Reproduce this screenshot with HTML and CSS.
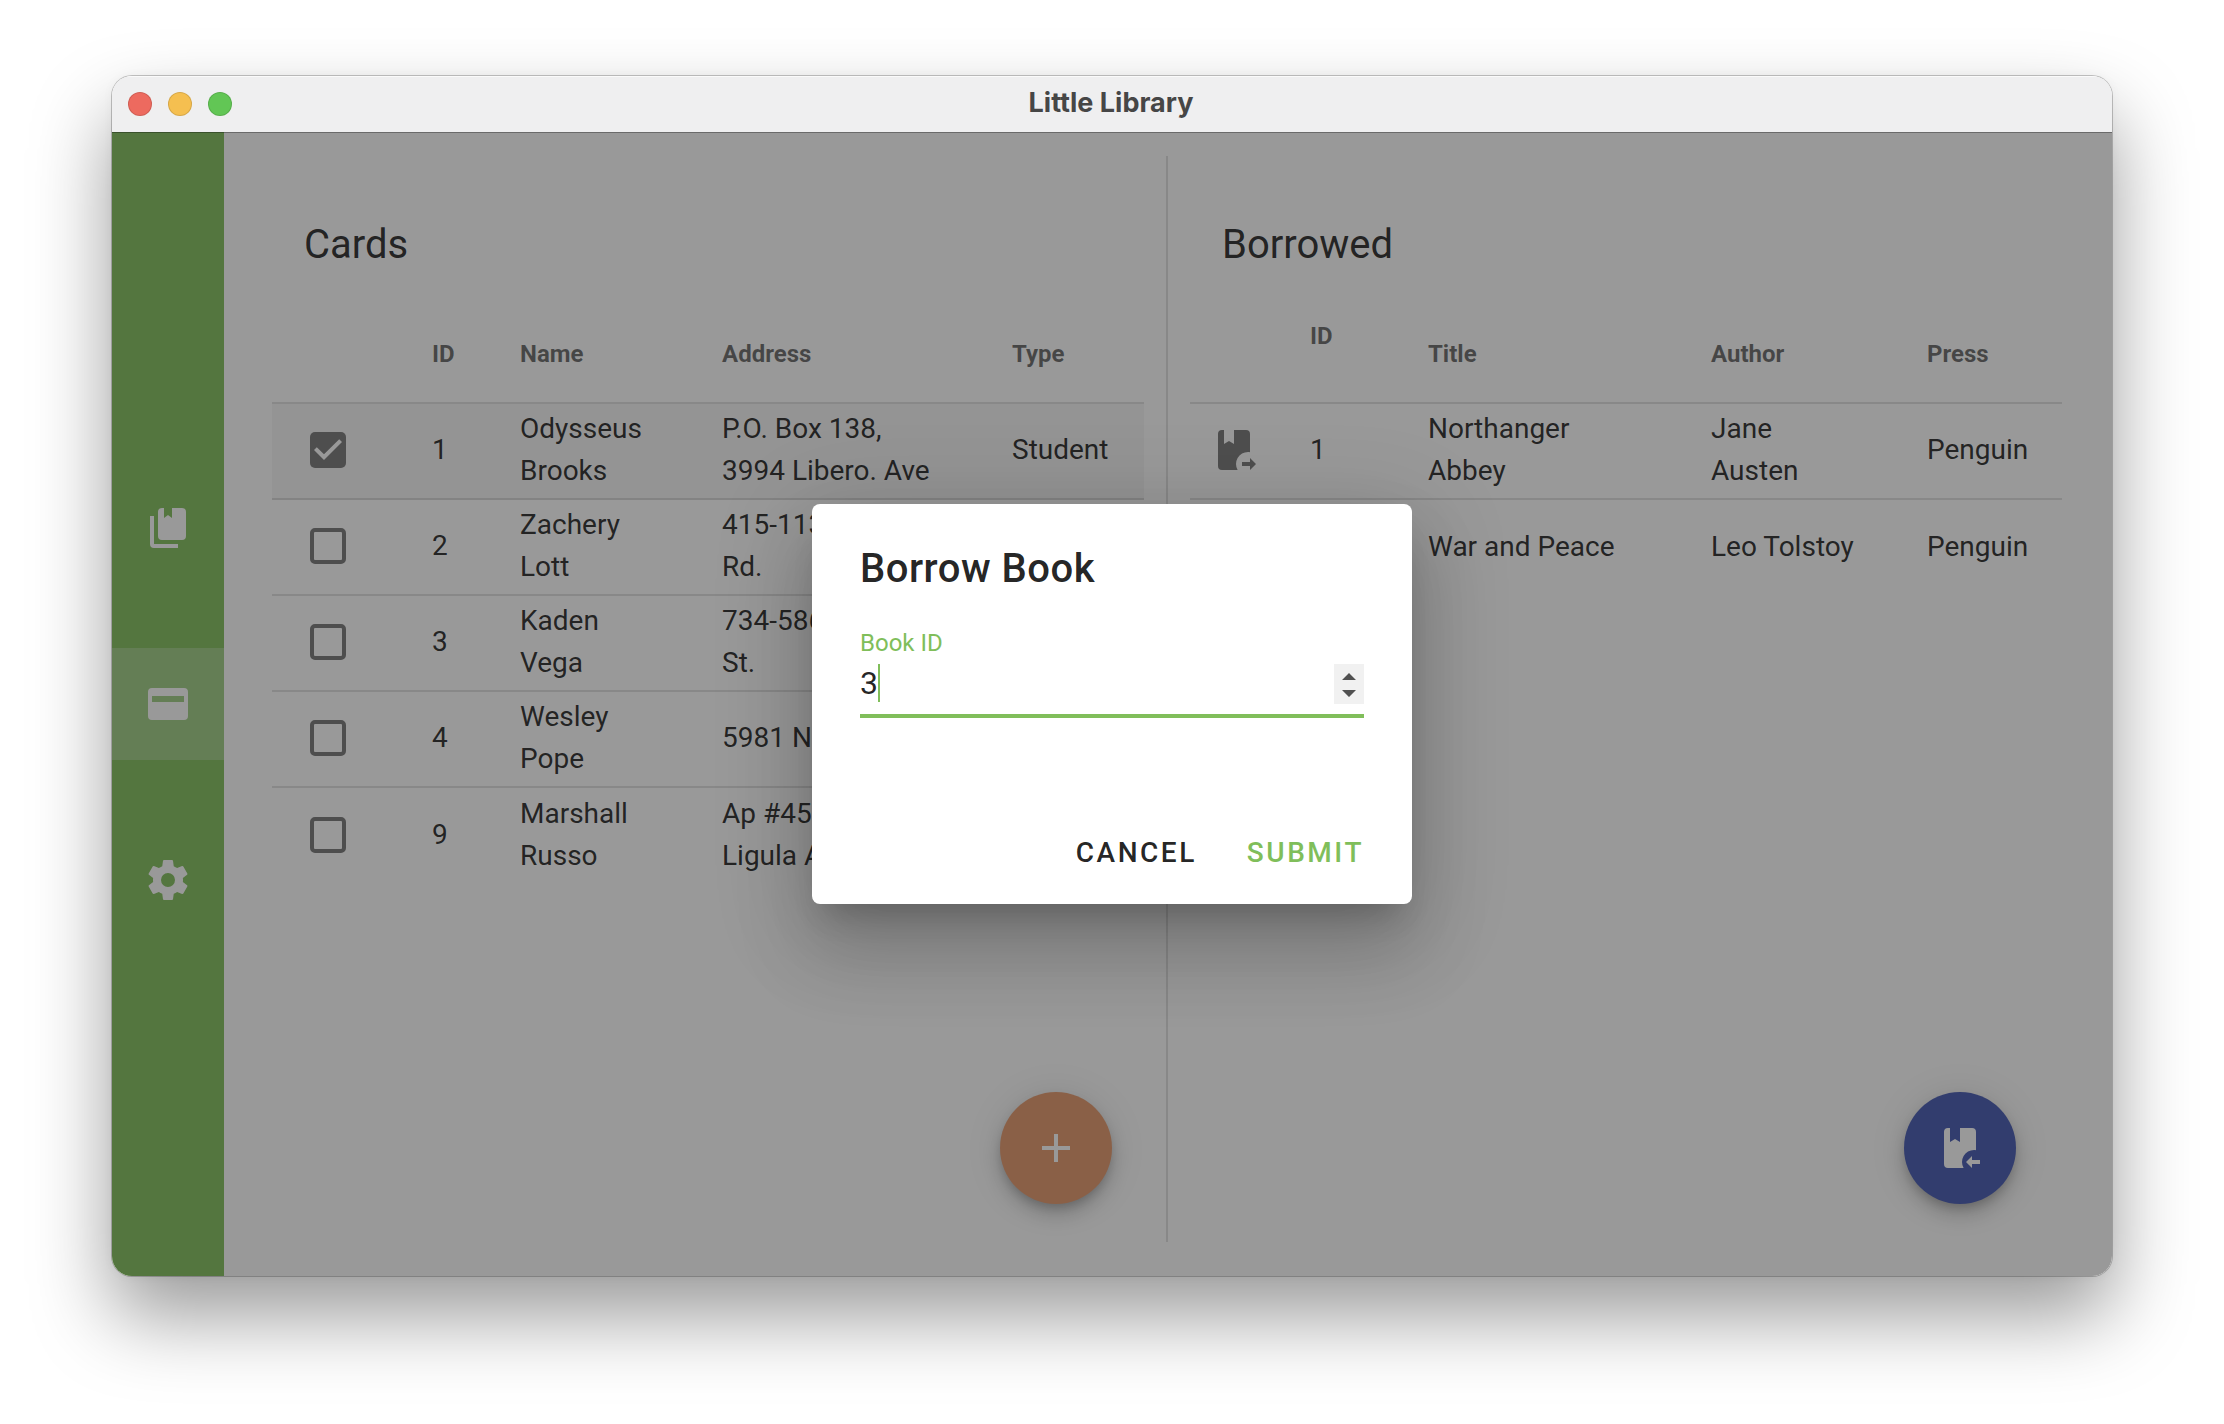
FILE: index.html
```html
<!DOCTYPE html>
<html lang="en">
<head>
<meta charset="utf-8">
<title>Little Library</title>
<link rel="stylesheet" href="styles.css">
</head>
<body>
<div class="window">
  <header class="titlebar">
    <div class="lights">
      <button class="light light-close" type="button" aria-label="Close"></button>
      <button class="light light-minimize" type="button" aria-label="Minimize"></button>
      <button class="light light-zoom" type="button" aria-label="Zoom"></button>
    </div>
    <h1 class="titlebar-title">Little Library</h1>
  </header>

  <div class="app">
    <nav class="sidebar" aria-label="Main">
      <a class="nav-item" href="#books" aria-label="Books">
        <svg class="icon" viewBox="0 0 24 24"><path d="M19,18H9A2,2 0 0,1 7,16V4A2,2 0 0,1 9,2H10V7L12,5.5L14,7V2H19A2,2 0 0,1 21,4V16A2,2 0 0,1 19,18M17,20V22H5A2,2 0 0,1 3,20V6H5V20H17Z"/></svg>
      </a>
      <a class="nav-item nav-item-active" href="#cards" aria-label="Cards" aria-current="page">
        <svg class="icon" viewBox="0 0 24 24"><path d="M20,4H4A2,2 0 0,0 2,6V18A2,2 0 0,0 4,20H20A2,2 0 0,0 22,18V6A2,2 0 0,0 20,4M20,11H4V8H20V11Z"/></svg>
      </a>
      <a class="nav-item" href="#settings" aria-label="Settings">
        <svg class="icon" viewBox="0 0 24 24"><path d="M12,15.5A3.5,3.5 0 0,1 8.5,12A3.5,3.5 0 0,1 12,8.5A3.5,3.5 0 0,1 15.5,12A3.5,3.5 0 0,1 12,15.5M19.43,12.97C19.47,12.65 19.5,12.33 19.5,12C19.5,11.67 19.47,11.34 19.43,11L21.54,9.37C21.73,9.22 21.78,8.95 21.66,8.73L19.66,5.27C19.54,5.05 19.27,4.96 19.05,5.05L16.56,6.05C16.04,5.66 15.5,5.32 14.87,5.07L14.5,2.42C14.46,2.18 14.25,2 14,2H10C9.75,2 9.54,2.18 9.5,2.42L9.13,5.07C8.5,5.32 7.96,5.66 7.44,6.05L4.95,5.05C4.73,4.96 4.46,5.05 4.34,5.27L2.34,8.73C2.21,8.95 2.27,9.22 2.46,9.37L4.57,11C4.53,11.34 4.5,11.67 4.5,12C4.5,12.33 4.53,12.65 4.57,12.97L2.46,14.63C2.27,14.78 2.21,15.05 2.34,15.27L4.34,18.73C4.46,18.95 4.73,19.03 4.95,18.95L7.44,17.94C7.96,18.34 8.5,18.68 9.13,18.93L9.5,21.58C9.54,21.82 9.75,22 10,22H14C14.25,22 14.46,21.82 14.5,21.58L14.87,18.93C15.5,18.67 16.04,18.34 16.56,17.94L19.05,18.95C19.27,19.03 19.54,18.95 19.66,18.73L21.66,15.27C21.78,15.05 21.73,14.78 21.54,14.63L19.43,12.97Z"/></svg>
      </a>
    </nav>

    <main class="main">
      <section class="pane pane-cards">
        <h2 class="pane-title">Cards</h2>
        <table class="table">
          <colgroup><col class="col-check"><col class="col-card-id"><col class="col-name"><col><col class="col-type"></colgroup>
          <thead>
            <tr><th></th><th>ID</th><th>Name</th><th>Address</th><th>Type</th></tr>
          </thead>
          <tbody>
            <tr class="row-selected"><td><input class="check" type="checkbox" aria-label="Select card 1" checked></td><td>1</td><td>Odysseus Brooks</td><td>P.O. Box 138, 3994 Libero. Ave</td><td>Student</td></tr>
            <tr><td><input class="check" type="checkbox" aria-label="Select card 2"></td><td>2</td><td>Zachery Lott</td><td>415-1132 Auctor Rd.</td><td>Student</td></tr>
            <tr><td><input class="check" type="checkbox" aria-label="Select card 3"></td><td>3</td><td>Kaden Vega</td><td>734-5861 Congue St.</td><td>Teacher</td></tr>
            <tr><td><input class="check" type="checkbox" aria-label="Select card 4"></td><td>4</td><td>Wesley Pope</td><td>5981 Nibh Rd.</td><td>Student</td></tr>
            <tr><td><input class="check" type="checkbox" aria-label="Select card 9"></td><td>9</td><td>Marshall Russo</td><td>Ap #452-2193 Ligula Av.</td><td>Teacher</td></tr>
          </tbody>
        </table>
        <button class="fab fab-add" type="button" aria-label="Add card">
          <svg class="icon" viewBox="0 0 24 24"><path d="M19,13H13V19H11V13H5V11H11V5H13V11H19V13Z"/></svg>
        </button>
      </section>

      <section class="pane pane-borrowed">
        <h2 class="pane-title">Borrowed</h2>
        <table class="table">
          <colgroup><col class="col-action"><col class="col-book-id"><col><col class="col-author"><col class="col-press"></colgroup>
          <thead>
            <tr><th></th><th class="th-raised">ID</th><th>Title</th><th>Author</th><th>Press</th></tr>
          </thead>
          <tbody>
            <tr>
              <td class="cell-action"><button class="icon-button" type="button" aria-label="Return Northanger Abbey"><svg class="icon" viewBox="0 0 24 24"><path d="M19,13C19.34,13 19.67,13.03 20,13.09V4A2,2 0 0,0 18,2H12V9L9.5,7.5L7,9V2H6A2,2 0 0,0 4,4V20A2,2 0 0,0 6,22H13.81A6,6 0 0,1 19,13M16,18H20V16L23,19L20,22V20H16V18Z"/></svg></button></td>
              <td>1</td><td>Northanger Abbey</td><td>Jane Austen</td><td>Penguin</td>
            </tr>
            <tr>
              <td class="cell-action"><button class="icon-button" type="button" aria-label="Return War and Peace"><svg class="icon" viewBox="0 0 24 24"><path d="M19,13C19.34,13 19.67,13.03 20,13.09V4A2,2 0 0,0 18,2H12V9L9.5,7.5L7,9V2H6A2,2 0 0,0 4,4V20A2,2 0 0,0 6,22H13.81A6,6 0 0,1 19,13M16,18H20V16L23,19L20,22V20H16V18Z"/></svg></button></td>
              <td>2</td><td>War and Peace</td><td>Leo Tolstoy</td><td>Penguin</td>
            </tr>
          </tbody>
        </table>
        <button class="fab fab-borrow" type="button" aria-label="Borrow book">
          <svg class="icon" viewBox="0 0 24 24"><path d="M19,13C19.34,13 19.67,13.03 20,13.09V4A2,2 0 0,0 18,2H12V9L9.5,7.5L7,9V2H6A2,2 0 0,0 4,4V20A2,2 0 0,0 6,22H13.81A6,6 0 0,1 19,13M22,18H18V16L15,19L18,22V20H22V18Z"/></svg>
        </button>
      </section>
    </main>

    <div class="overlay">
      <form class="dialog" role="dialog" aria-modal="true" aria-labelledby="dialog-title">
        <h2 class="dialog-title" id="dialog-title">Borrow Book</h2>
        <div class="field">
          <label class="field-label" for="book-id">Book ID</label>
          <div class="field-control">
            <input class="field-input" id="book-id" type="number" value="3">
            <span class="caret"></span>
            <svg class="spinner" viewBox="0 0 30 40" aria-hidden="true"><path d="M15,9L22,16H8ZM15,33L8,26H22Z"/></svg>
          </div>
        </div>
        <div class="dialog-actions">
          <button class="text-button" type="button">CANCEL</button>
          <button class="text-button text-button-primary" type="submit">SUBMIT</button>
        </div>
      </form>
    </div>
  </div>
</div>
</body>
</html>
```
FILE: styles.css
```css
* {
  box-sizing: border-box;
}

body {
  display: flex;
  min-height: 100vh;
  margin: 0;
  padding: 76px 112px 148px;
  background: #fff;
  color: rgba(0, 0, 0, 0.87);
  font: 28px/42px Roboto, sans-serif;
}

h1,
h2 {
  margin: 0;
}

button {
  padding: 0;
  border: 0;
  background: none;
  color: inherit;
  font: inherit;
}

.icon {
  display: block;
  width: 48px;
  height: 48px;
  fill: currentColor;
}

/* Window frame */

.window {
  display: flex;
  flex: 1;
  flex-direction: column;
  overflow: hidden;
  border-radius: 20px;
  box-shadow: 0 0 0 1px rgba(0, 0, 0, 0.22), 0 0 12px rgba(0, 0, 0, 0.04), 0 40px 80px rgba(0, 0, 0, 0.4);
}

.titlebar {
  display: grid;
  grid-template-columns: 1fr auto 1fr;
  align-items: center;
  height: 56px;
  padding: 0 18px 0 16px;
  background: #efeff0;
  box-shadow: inset 0 1px #fafafa;
}

.lights {
  display: flex;
  gap: 16px;
}

.light {
  width: 24px;
  height: 24px;
  border: 1px solid rgba(0, 0, 0, 0.12);
  border-radius: 50%;
}

.light-close {
  background: #ed6a5f;
}

.light-minimize {
  background: #f5bf50;
}

.light-zoom {
  background: #62c655;
}

.titlebar-title {
  padding-bottom: 2px;
  color: #464646;
  font: 700 27px/32px Inter, sans-serif;
}

.app {
  position: relative;
  display: flex;
  flex: 1;
  background: #fff;
}

/* Navigation */

.sidebar {
  display: flex;
  flex-direction: column;
  justify-content: center;
  gap: 64px;
  width: 112px;
  background: #80be5a;
  color: #fff;
}

.nav-item {
  display: grid;
  place-items: center;
  height: 112px;
  color: inherit;
}

.nav-item-active {
  background: rgba(255, 255, 255, 0.24);
}

/* Panes */

.main {
  display: grid;
  flex: 1;
  grid-template-columns: 1fr 1fr;
  padding: 24px 24px 34px;
}

.pane {
  display: flex;
  flex-direction: column;
  padding: 64px 26px 38px 22px;
}

.pane-cards {
  padding-right: 22px;
  padding-left: 24px;
  border-right: 2px solid rgba(0, 0, 0, 0.12);
}

.pane-title {
  margin-bottom: 36px;
  padding-left: 32px;
  font-size: 40px;
  font-weight: 400;
  line-height: 50px;
}

.table {
  width: 100%;
  border-spacing: 0;
  table-layout: fixed;
}

.table th,
.table td {
  height: 96px;
  padding: 0 32px;
  border-bottom: 2px solid rgba(0, 0, 0, 0.12);
  text-align: left;
}

.table td {
  padding-bottom: 2px;
}

.table th {
  height: 98px;
  color: rgba(0, 0, 0, 0.6);
  font-size: 24px;
  font-weight: 700;
  line-height: 36px;
}

.table tr:last-child td {
  border-bottom: 0;
}

.table .th-raised {
  padding-bottom: 36px;
}

.table .cell-action {
  padding-right: 20px;
  padding-left: 20px;
}

.row-selected {
  background: #f5f5f5;
}

.col-check {
  width: 128px;
}

.col-card-id {
  width: 88px;
}

.col-name {
  width: 202px;
}

.col-type {
  width: 164px;
}

.col-action {
  width: 88px;
}

.col-book-id {
  width: 118px;
}

.col-author {
  width: 216px;
}

.col-press {
  width: 167px;
}

.check {
  display: block;
  width: 36px;
  height: 36px;
  margin: 0 6px;
  border: 4px solid #757575;
  border-radius: 5px;
  appearance: none;
}

.check:checked {
  border: 0;
  background: #757575;
}

.check:checked::before {
  display: block;
  width: 36px;
  height: 36px;
  background: #fff;
  clip-path: path("M14,28L4,18L6.8,15.2L14,22.3L29.2,7.2L32,10Z");
  content: "";
}

.icon-button {
  display: block;
  color: #757575;
}

.fab {
  display: grid;
  place-items: center;
  align-self: flex-end;
  width: 112px;
  height: 112px;
  margin-top: auto;
  margin-right: 32px;
  border-radius: 50%;
  box-shadow: 0 6px 10px -2px rgba(0, 0, 0, 0.2), 0 12px 20px rgba(0, 0, 0, 0.14), 0 2px 36px rgba(0, 0, 0, 0.12);
  color: #fff;
}

.fab-add {
  background: #e49668;
}

.fab-borrow {
  margin-right: 46px;
  background: #4155b0;
}

/* Dialog */

.overlay {
  position: absolute;
  inset: 0;
  display: grid;
  place-items: center;
  background: rgba(33, 33, 33, 0.46);
  box-shadow: inset 0 1px rgba(0, 0, 0, 0.3);
}

.dialog {
  display: flex;
  flex-direction: column;
  width: 600px;
  min-height: 400px;
  padding: 40px 48px 16px;
  border-radius: 8px;
  background: #fff;
  box-shadow: 0 22px 30px -14px rgba(0, 0, 0, 0.2), 0 48px 76px 6px rgba(0, 0, 0, 0.14), 0 18px 92px 16px rgba(0, 0, 0, 0.12);
}

.dialog-title {
  font-size: 40px;
  font-weight: 500;
  letter-spacing: 0.0125em;
  line-height: 50px;
}

.field {
  margin-top: 30px;
  border-bottom: 4px solid #80be5a;
}

.field-label {
  display: block;
  margin-bottom: 2px;
  color: #80be5a;
  font-size: 24px;
  line-height: 38px;
}

.field-control {
  position: relative;
  display: flex;
  align-items: flex-start;
  height: 40px;
  margin-bottom: 10px;
}

.field-input {
  flex: 1;
  min-width: 0;
  height: 38px;
  padding: 0;
  border: 0;
  outline: 0;
  background: none;
  color: rgba(0, 0, 0, 0.87);
  font: 32px/38px Roboto, sans-serif;
  appearance: textfield;
}

.field-input::-webkit-inner-spin-button {
  appearance: none;
}

.caret {
  position: absolute;
  top: 0;
  left: 18px;
  width: 2px;
  height: 38px;
  background: #80be5a;
}

.spinner {
  width: 30px;
  height: 40px;
  background: #f1f1f1;
  fill: #505050;
}

.dialog-actions {
  display: flex;
  justify-content: flex-end;
  gap: 18px;
  margin: auto -16px 0 0;
}

.text-button {
  height: 70px;
  padding: 0 16px;
  font-size: 28px;
  font-weight: 500;
  letter-spacing: 0.09em;
}

.text-button-primary {
  color: #80be5a;
}
```
